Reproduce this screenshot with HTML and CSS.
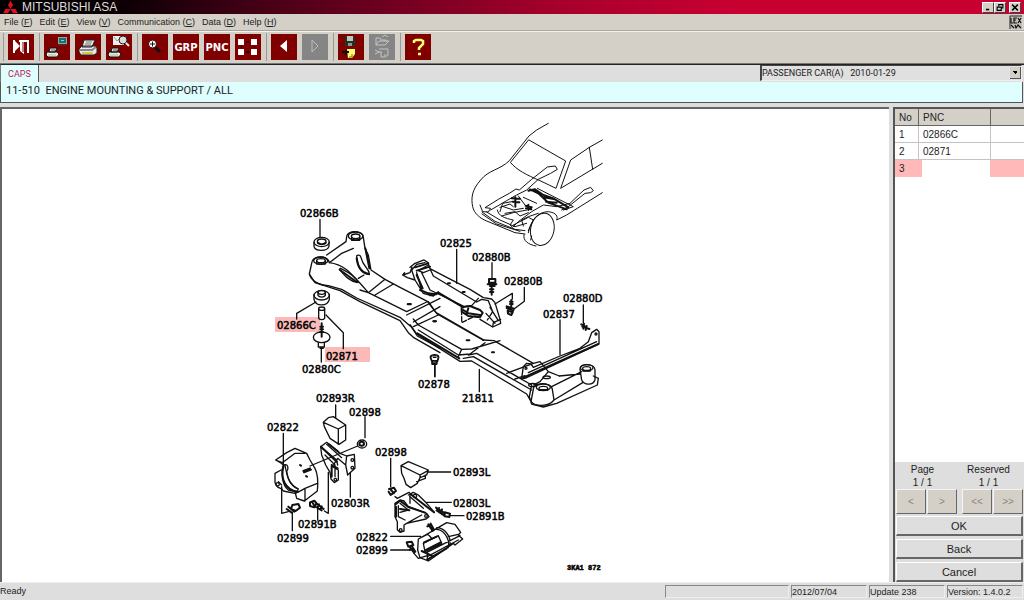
FILE: index.html
```html
<!DOCTYPE html>
<html lang="en">
<head>
<meta charset="utf-8">
<title>MITSUBISHI ASA</title>
<link rel="stylesheet" href="styles.css">
</head>
<body>
<header class="titlebar">
  <svg class="logo" viewBox="0 0 18 15" aria-hidden="true"><path d="M9 0l3 5-3 5-3-5zM9 10H3L0 15h6zM9 10h6l3 5h-6z" fill="#e01020"/></svg>
  <h1 class="app-name">MITSUBISHI ASA</h1>
  <div class="window-controls">
    <button class="win-btn" aria-label="Minimize"><svg viewBox="0 0 11 11"><path d="M3 8h4" stroke="#000" stroke-width="2"/></svg></button>
    <button class="win-btn" aria-label="Restore"><svg viewBox="0 0 11 11"><path d="M4 4V2h5v4H7M4 2h5M2 5h5v4H2zM2 5h5" fill="none" stroke="#000" stroke-width="1.4"/></svg></button>
    <button class="win-btn win-close" aria-label="Close"><svg viewBox="0 0 11 11"><path d="M2 2l7 7M9 2L2 9" stroke="#000" stroke-width="1.8"/></svg></button>
  </div>
</header>

<nav class="menubar">
  <button class="menu">File (<u>F</u>)</button>
  <button class="menu">Edit (<u>E</u>)</button>
  <button class="menu">View (<u>V</u>)</button>
  <button class="menu">Communication (<u>C</u>)</button>
  <button class="menu">Data (<u>D</u>)</button>
  <button class="menu">Help (<u>H</u>)</button>
  <svg class="lex" viewBox="0 0 13 14" aria-hidden="true"><path d="M0 0h13v14H0z" fill="#c4c0b8"/><path d="M1 14V1h12" fill="none" stroke="#333"/><path d="M2 3v5h2M8 3H5v5h3M5 5h2M9 3l3 5M12 3L9 8M2 10l3 3M6 10l1 3 2-3 3 3" fill="none" stroke="#111" stroke-width="1.2"/></svg>
</nav>

<div class="toolbar" role="toolbar" aria-label="Tools">
  <span class="sep"></span>
  <button class="tool" aria-label="Exit"><svg viewBox="0 0 26 26"><path d="M5 6h2v13H5zM7 7l5 5-5 5z" fill="#fff"/><path d="M11 6h10v13h-2V8h-3v12l-4-3V8h-1z" fill="#fff"/><path d="M15 8v10" stroke="#800000"/></svg></button>
  <span class="sep"></span>
  <button class="tool" aria-label="Print screen"><svg viewBox="0 0 26 26"><path d="M14 3h9v7h-9z" fill="#8aa"/><path d="M15 4h7v5h-7z" fill="#187070"/><path d="M17 6h3v1h-3z" fill="#6dd"/><path d="M14 11h9" stroke="#533"/><path d="M6 14h7l-2 4H5zM3 18h10l2 2-2 3H4l-2-2z" fill="#e8e8e8" stroke="#111"/><path d="M4 21h8" stroke="#bb8"/><path d="M7 16h4" stroke="#555"/></svg></button>
  <button class="tool" aria-label="Print"><svg viewBox="0 0 26 26"><path d="M9 6h11l-3 7H7zM7 12h13l2 2v5l-3 2H6l-2-3v-3z" fill="#e8e8e8" stroke="#222"/><path d="M11 8h6M10 10h6" stroke="#777"/><path d="M5 16h12l4-3" fill="none" stroke="#888" stroke-width="2"/><path d="M7 19h11" stroke="#d4c64c" stroke-width="2"/></svg></button>
  <button class="tool" aria-label="Print preview"><svg viewBox="0 0 26 26"><path d="M7 2h11v9H7z" fill="#eee"/><path d="M8 3l3 4 3-3 3 6" fill="none" stroke="#999"/><circle cx="17" cy="6" r="4" fill="#ddd" stroke="#222"/><path d="M20 9l3 3" stroke="#eee" stroke-width="2"/><path d="M6 14h7l-2 4H5zM3 18h10l2 2-2 3H4l-2-2z" fill="#e8e8e8" stroke="#111"/><path d="M4 21h8" stroke="#bb8"/><path d="M7 16h4" stroke="#555"/></svg></button>
  <span class="sep"></span>
  <button class="tool" aria-label="Zoom in"><svg viewBox="0 0 26 26"><path d="M13 13l5 5" stroke="#111" stroke-width="3"/><circle cx="10.500" cy="10" r="4" fill="#fff" stroke="#400"/><path d="M8 10h5M10.500 7.500v5" stroke="#111"/></svg></button>
  <button class="tool tool-text">GRP</button>
  <button class="tool tool-text">PNC</button>
  <button class="tool" aria-label="Tile view"><svg viewBox="0 0 26 26"><path d="M3 5h6v6H3zM16 5h6v6h-6zM3 15h6v6H3zM16 15h6v6h-6z" fill="#fff"/><path d="M11 8h3M11 18h3M6 13h1M19 13h1" stroke="#200" stroke-width="2"/></svg></button>
  <span class="sep"></span>
  <button class="tool" aria-label="Previous"><svg viewBox="0 0 26 26"><path d="M9 12l7-6v12z" fill="#fff"/></svg></button>
  <button class="tool" aria-label="Next" disabled><svg viewBox="0 0 26 26"><path d="M10 6l6 6-6 6z" fill="none" stroke="#bbb"/></svg></button>
  <span class="sep"></span>
  <button class="tool" aria-label="Save"><svg viewBox="0 0 26 26"><path d="M7 2h10v10H7z" fill="#243424"/><path d="M9 2h6v5H9z" fill="#bcc8bc"/><path d="M10 9h4v3h-4z" fill="#899"/><path d="M9 15h8v5l-3 4h-4z" fill="#ffff70"/><path d="M4 18h7M8 16v5" stroke="#111" stroke-width="2"/><path d="M14 20v3h-3" fill="none" stroke="#770"/></svg></button>
  <button class="tool" aria-label="Open" disabled><svg viewBox="0 0 26 26" fill="none" stroke="#c4c4c4"><path d="M7 11V4h4l1 2h5v2M7 11l3-4h10l-4 4zM13 3l3-2 3 2M10 15h9v6l-3 2h-4v-5M6 16l4 2-4 2M9 18h4M16 20v2"/></svg></button>
  <span class="sep"></span>
  <button class="tool" aria-label="Help"><svg viewBox="0 0 26 26"><path d="M9 9V7l2-1h5l2 1v3l-4 4v2M13 20h3" fill="none" stroke="#ffff70" stroke-width="2.500"/></svg></button>
</div>

<div class="tabs">
  <button class="tab">CAPS</button>
  <select class="catalog" aria-label="Catalog"><option>PASSENGER CAR(A) &nbsp; 2010-01-29</option></select>
</div>
<h2 class="heading">11-510 &nbsp;ENGINE MOUNTING &amp; SUPPORT / ALL</h2>

<main class="main">
  <section class="canvas" aria-label="Parts drawing">
    <svg class="drawing" viewBox="2 109 887 472" preserveAspectRatio="xMinYMin meet">
      <g class="marks"><rect x="275" y="317" width="45" height="15"/><rect x="325" y="347" width="45" height="15"/></g>

      <!-- vehicle body -->
      <g class="ink thin" transform="translate(460 110) scale(.33333)">
        <path d="M265 40L230 60 207 78 148 152C120 180 85 180 62 210C35 240 33 265 38 290C42 310 60 325 80 333L165 368 195 372"/>
        <path d="M207 90L317 153 288 235 240 212C200 195 170 180 152 158ZM427 90L388 112 332 150 302 235 427 160M388 112L398 178"/>
        <path d="M60 285L68 305 85 306 92 295 75 293 115 268 148 250 168 237 178 240 215 208 262 171 286 168 292 178 272 190 235 208 200 240 170 255 140 272 92 300"/>
        <path d="M80 306L120 330 165 350 200 340M66 312L110 342 180 364M120 305L128 280 155 275M112 300C115 318 135 325 160 330L150 345 158 352 175 335 215 305 250 285 290 290 330 280 372 240 392 232 400 242 392 248 375 250 325 290 305 300"/>
        <path d="M205 368C212 330 235 305 265 305C290 308 294 320 290 330L320 315 427 248M190 348L185 330 205 320 235 310"/>
        <path d="M130 290L160 300 190 295M135 310L165 305 180 318 205 308M190 262L230 280"/>
        <ellipse cx="247" cy="358" rx="35" ry="49" transform="rotate(12 247 358)"/><path d="M192 374C188 392 205 404 228 408M215 378L212 390"/>
        <path d="M66 306L105 334 165 358 195 362M120 292L150 282 160 290M125 318L160 308 200 300M160 345L205 322 220 330 205 362M232 235L340 290 310 300M175 258L195 285"/>
        <path class="heavy" d="M205 242L225 238 250 255 280 265 325 292M210 238L235 250 265 278 320 298M252 262L285 268M258 275L290 278M155 265L180 266M158 275L178 277M197 287L215 292M198 295L214 298M166 262V290M205 284V300"/>
      </g>

      <!-- crossmember, left end and its hardware -->
      <g class="ink" transform="translate(260 200) scale(.33333)">
        <path d="M180 58V112M110 357V340L168 306M198 345L250 398V446M184 446V486"/>
        <path d="M162 127V139C165 155 202 155 207 139V127"/><ellipse cx="185" cy="126" rx="23" ry="14"/><ellipse cx="185" cy="125" rx="13" ry="8"/><path class="heavy" d="M174 128C180 134 190 134 197 128"/>
        <path d="M260 110C262 90 308 90 310 112L315 145 325 165 333 210 375 238 420 262 502 304 528 338M260 110L258 125 200 165M155 190C155 165 205 165 208 188L245 160 280 145M155 190L148 222C155 245 180 255 205 257L245 268 290 294 420 352 455 382 472 408 540 445"/>
        <path d="M208 188C260 195 280 230 305 255L325 278 375 238M345 285L400 252M150 225L165 248 240 272 300 305 420 362 445 398 460 412 540 458M325 278L440 335 500 306M440 345L540 295M325 278L300 270M460 366L540 320"/>
        <ellipse cx="287" cy="108" rx="22" ry="12"/><ellipse cx="287" cy="109" rx="13" ry="7"/><ellipse cx="182" cy="182" rx="21" ry="11"/><ellipse cx="183" cy="182" rx="13" ry="6"/><path d="M170 182V192H196V182M275 110V121H299V110"/>
        <path d="M290 168C292 200 305 220 328 224C330 205 310 205 302 170C300 165 293 164 290 168M238 208C255 228 270 245 294 248C290 232 262 215 242 205ZM318 150L330 205M295 235L312 225"/>
        <path class="heavy" d="M290 175C293 200 305 218 325 222M240 210L290 246M316 145L328 205M443 313H452M520 364H528"/>
        <path d="M162 283V298C166 320 203 320 208 298V283"/><ellipse cx="185" cy="286" rx="23" ry="14"/><path d="M174 276V286C178 293 192 293 196 286V276"/><ellipse cx="185" cy="277" rx="11" ry="6"/>
        <path d="M176 327V355C180 360 190 360 194 355V327"/><ellipse cx="185" cy="326" rx="9" ry="5"/>
        <ellipse cx="185" cy="412" rx="25" ry="16"/><path d="M175 430V441H193V430M180 445H190"/><path class="heavy" d="M185 370V410M181 380H189M181 388H189M181 396H189"/>
        <path d="M511 470C513 462 535 462 536 470L532 482H516ZM517 483V491H530V483M525 491V530M520 472H528"/>
      </g>

      <!-- upper bracket and crossmember, right end -->
      <g class="ink" transform="translate(400 230) scale(.33333)">
        <path d="M170 58V160M276 98V145M373 172V214L342 237M285 222L337 190V207M550 225V280M480 270V374M238 418V485"/>
        <path d="M185 240V278L225 258" stroke-dasharray="14 6"/>
        <path d="M30 112L45 100 72 90 84 98 90 116 130 137 210 178 250 203 275 207 285 218 300 268 302 280 278 291 240 268M8 135L30 128 36 112M8 135L22 143 45 150 70 190 100 198 115 185M8 135L14 128M45 150L35 120 50 103 75 98M50 128L65 180M65 128L90 180 190 228M90 120L70 128 55 122 85 105M90 116L100 138 190 192 230 216M230 216L245 208 265 212 278 245 262 270M270 232L295 272M258 250L285 280M235 205L215 227 190 230M278 291L280 278 302 268"/>
        <path class="heavy" d="M45 112L85 100M50 122L90 110M60 180L85 190 108 193M90 196L115 190M185 232L210 228 240 240 248 248 240 262 205 258 185 245ZM190 240L205 250 240 255M115 188L190 232M50 135L68 175M205 235L200 250M144 160H150M188 186H194M24 222H32M101 274H107M200 331H208M276 367H282"/>
        <path d="M85 215L110 250M248 330L282 332 400 400 420 395 445 425 478 438M40 290L115 255M40 267L55 285 185 358 215 357 300 332M55 300L175 375 210 372 255 338M185 358L175 380M30 284L50 312 180 394 215 393 380 492 395 518M190 385L220 380 395 480M205 375L230 370 395 465M320 430L400 400M345 447L375 437M395 465L388 500 395 522 430 531 470 520 592 465 595 445 580 438"/>
        <path class="heavy" d="M112 251L250 330M52 310L178 385"/>
        <path d="M400 478C398 455 455 455 457 478L462 510C445 532 405 530 393 515ZM540 418C540 398 585 400 585 420V450C578 468 552 465 545 450ZM455 470L545 425M462 510L548 458M400 465L420 455 445 425M478 438L540 432"/>
        <ellipse cx="430" cy="472" rx="21" ry="10"/><ellipse cx="430" cy="475" rx="13" ry="6"/><ellipse cx="560" cy="413" rx="19" ry="9"/><ellipse cx="560" cy="416" rx="12" ry="6"/><ellipse cx="440" cy="442" rx="11" ry="4"/><ellipse cx="398" cy="465" rx="12" ry="5"/>
        <path class="heavy" d="M418 480H442M550 422H570M370 443L595 342"/>
        <path d="M365 445L370 410 380 400 393 402 400 412 480 378 540 355 565 335 575 308 590 298 597 305V342L375 445ZM385 428L590 335"/><circle cx="378" cy="415" r="3"/><circle cx="588" cy="312" r="3"/>
        <path class="heavy" d="M267 147H286V158H267ZM263 163H289M270 168H284M275 172V194M270 178H280M270 186H280M334 210V228M330 215H338M330 222H338M320 229L342 236M320 234L340 242M323 242L338 247 334 255 324 251ZM544 283L556 290M547 290L568 297M552 281L550 296M560 288L557 300"/>
        <path d="M91 383C93 375 115 375 116 383L112 396H96ZM96 397V403H110V397M104 403V440"/>
      </g>

      <!-- right-hand engine mount -->
      <g class="ink" transform="translate(255 385) scale(.33333)">
        <path d="M242 60V98M330 95V158M85 145V238M286 262V336M80 305V385L100 380M220 262V385L208 378M112 382V437M188 368V405M308 183L165 243"/>
        <path d="M205 112L220 98 235 95 272 120V165L252 178 225 160 208 125ZM205 112L250 132 272 120M250 132V178"/>
        <ellipse cx="321" cy="177" rx="14" ry="12"/><ellipse class="heavy" cx="320" cy="176" rx="7" ry="6"/>
        <path d="M62 225L95 203 120 190 155 205 165 225 180 250C190 270 190 290 187 318L148 348 125 340 120 320 100 315C80 300 78 260 85 240L75 232ZM62 225L82 233 120 205 150 205M85 240C100 235 102 250 95 260C98 285 110 305 130 312L123 325M78 255L60 265V292C65 315 80 305 85 318L120 325M128 322L150 310 187 295M70 290L80 300M150 310V348"/>
        <circle cx="68" cy="298" r="5"/><path class="heavy" d="M86 242C75 280 90 315 128 320M145 258L165 250M147 262L168 254M135 240L138 242M153 273L156 275"/>
        <path d="M90 240C98 290 110 300 125 310"/>
        <path d="M197 185L215 172 255 205 275 213 298 208 300 250 278 270 272 240 248 220 232 245 250 255V285L238 293 228 282 225 262 212 240 200 210ZM197 185L245 225 248 240M215 178L260 218M210 210L240 240V275M275 213L272 240"/><circle cx="292" cy="225" r="4"/><circle cx="292" cy="248" r="4"/><circle cx="241" cy="284" r="4"/>
        <path class="heavy" d="M198 185L245 230M230 240L248 250M230 240V275M222 178L250 200"/>
        <path class="heavy" d="M95 372L110 383M100 365L118 380M112 360L130 357 135 368 122 378 108 372ZM165 352L178 347 185 355 178 367 165 363ZM182 353L206 372M178 363L200 376M172 352L178 362M192 358L188 368M200 364L196 374"/>
      </g>

      <!-- left-hand engine mount -->
      <g class="ink" transform="translate(340 435) scale(.33333)">
        <path d="M152 70V155M262 111H332M260 202H334M330 242H372M152 304H242M152 345H205M165 185L172 190 207 172 215 180M222 355L235 370 262 362M210 180V205"/>
        <path d="M183 92L205 80 265 105 260 120 240 128 232 145 212 158 198 148 192 130 185 115ZM183 92L240 120 265 106M240 120V128M230 140L256 130V120"/>
        <path class="heavy" d="M147 162L162 158 168 168 152 180 146 170M153 165L162 175"/>
        <path d="M165 205L180 195 192 198 205 215 260 235 267 245 258 252 200 265 192 270V288L180 292 172 284V260L165 245ZM180 205L205 225 180 232M205 180L220 172 235 180 260 205 283 232M210 185L250 220M200 265L245 240M175 212V245L195 255"/>
        <circle cx="182" cy="285" r="4"/><circle cx="258" cy="243" r="4"/><circle cx="225" cy="183" r="5"/>
        <path class="heavy" d="M167 208L180 197 205 216 255 233M168 215V245M215 180L282 232M180 222L208 226"/>
        <path class="heavy" d="M288 218L315 235M290 226L312 241M297 219L294 228M306 223L302 234M314 232L330 236 328 246 314 244Z"/>
        <path d="M235 312L260 298 320 263 345 268 362 292 355 300 368 312 345 330 340 325 265 378 240 368 233 345ZM235 312L262 298C268 300 270 305 275 310M250 325L295 302 305 325 255 350ZM275 285C310 275 330 310 325 338M290 278C320 280 332 310 330 325M265 350L360 302M262 365L355 315M325 305L355 298M262 350V375"/>
        <path class="heavy" d="M252 322L290 305M258 345L302 322M245 348L275 362M262 374L320 340M265 268L278 288M272 266L282 284M262 274L272 268M200 322L215 320 220 330 205 335ZM210 337L222 353M215 332L226 350M208 345L220 342"/>
      </g>

      <g class="labels">
        <text x="300" y="217">02866B</text><text x="440" y="247">02825</text><text x="472" y="261">02880B</text><text x="504" y="285">02880B</text>
        <text x="563" y="302">02880D</text><text x="543" y="318">02837</text><text x="277" y="329">02866C</text><text x="326" y="360">02871</text>
        <text x="302" y="373">02880C</text><text x="418" y="388">02878</text><text x="462" y="402">21811</text><text x="316" y="402">02893R</text>
        <text x="349" y="416">02898</text><text x="267" y="431">02822</text><text x="375" y="456">02898</text><text x="453" y="476">02893L</text>
        <text x="331" y="507">02803R</text><text x="453" y="507">02803L</text><text x="466" y="520">02891B</text><text x="298" y="528">02891B</text>
        <text x="277" y="542">02899</text><text x="356" y="541">02822</text><text x="356" y="554">02899</text>
        <text class="plate" x="567" y="570">3KA1 872</text>
      </g>
    </svg>
  </section>

  <aside class="side">
    <div class="list">
      <table class="pnc">
        <colgroup><col class="c-no"><col class="c-pnc"><col></colgroup>
        <thead><tr><th>No</th><th>PNC</th><th></th></tr></thead>
        <tbody>
          <tr><td>1</td><td>02866C</td><td></td></tr>
          <tr><td>2</td><td>02871</td><td></td></tr>
          <tr class="current"><td>3</td><td></td><td></td></tr>
        </tbody>
      </table>
    </div>
    <div class="pager">
      <div class="pager-group"><p class="pager-text">Page<br>1 / 1</p><div class="pair"><button class="step" disabled>&lt;</button><button class="step" disabled>&gt;</button></div></div>
      <div class="pager-group"><p class="pager-text">Reserved<br>1 / 1</p><div class="pair"><button class="step" disabled>&lt;&lt;</button><button class="step" disabled>&gt;&gt;</button></div></div>
    </div>
    <div class="actions"><button class="action">OK</button><button class="action">Back</button><button class="action">Cancel</button></div>
  </aside>
</main>

<footer class="status">
  <span class="ready">Ready</span>
  <span class="cell cell-wide"></span>
  <span class="cell">2012/07/04</span>
  <span class="cell">Update 238</span>
  <span class="cell">Version: 1.4.0.2</span>
</footer>
</body>
</html>
```
FILE: styles.css
```css
* { box-sizing: border-box; }
body {
  margin: 0;
  height: 100vh;
  display: flex;
  flex-direction: column;
  background: #dedede;
  color: #222;
  font-family: "Liberation Sans", Arial, sans-serif;
  font-size: 10px;
}
button { font: inherit; color: inherit; padding: 0; border: 0; background: none; border-radius: 0; }
h1, h2, p { margin: 0; font-weight: normal; }

.titlebar {
  flex: none;
  height: 14px;
  display: flex;
  align-items: center;
  padding: 0 3px;
  background: linear-gradient(90deg, #000 0, #0c0004 12%, #4c0018 27%, #a8002c 55%, #c80032 72%);
}
.logo { width: 15px; height: 14px; }
.app-name { margin-left: 4px; font-size: 12px; line-height: 16px; color: #ddd; }
.window-controls { display: flex; margin-left: auto; }
.win-btn { width: 12px; height: 11px; background: #d4d0c8; border: 1px solid; border-color: #fff #444 #444 #fff; }
.win-btn svg { display: block; width: 100%; height: 100%; }
.win-close { margin-left: 3px; }

.menubar {
  flex: none;
  height: 17px;
  display: flex;
  align-items: center;
  gap: 7px;
  padding: 0 2px 0 4px;
  background: #d4d0c8;
  border-bottom: 1px solid #aaa69e;
}
.menu { font-size: 9px; white-space: nowrap; }
.lex { width: 13px; height: 14px; margin-left: auto; }

.toolbar {
  flex: none;
  height: 33px;
  display: flex;
  align-items: center;
  gap: 5px;
  padding: 0 3px 1px;
  background: #d4d0c8;
  border-top: 1px solid #f4f2ee;
  border-bottom: 1px solid #777;
}
.sep { width: 1px; height: 28px; margin-right: -1px; background: #999; }
.tool { width: 26px; height: 26px; background: #800000; }
.tool:disabled { background: #858585; }
.tool svg { display: block; width: 26px; height: 26px; }
.tool-text { font: bold 10px "DejaVu Sans", sans-serif; color: #fff; text-align: center; }

.tabs {
  flex: none;
  height: 18px;
  display: flex;
  justify-content: space-between;
  padding-right: 2px;
  border-top: 1px solid #222;
  border-left: 1px solid #777;
}
.tab {
  width: 38px;
  background: #dfffff;
  border-right: 1px solid #555;
  color: #c02050;
  font: 9px Roboto, sans-serif;
}
.catalog {
  width: 262px;
  height: 16px;
  appearance: none;
  padding: 0;
  border: 1px solid;
  border-color: #444 #eee #eee #444;
  border-left-width: 2px;
  border-radius: 0;
  color: #222;
  font: 9px Roboto, sans-serif;
  background:
    conic-gradient(from -45deg at 50% 100%, #000 90deg, transparent 0) right 3px top 5px / 6px 3px no-repeat,
    linear-gradient(#d4d0c8, #d4d0c8) right 1px top 1px / 10px 11px no-repeat,
    linear-gradient(#555, #555) right 0 top 1px / 11px 12px no-repeat,
    #e0e0e0;
}
/* down-pointing arrow over its raised face */
.catalog {
  background-image:
    conic-gradient(from -45deg at 50% 100%, #000 90deg, #000 0),
    linear-gradient(#d4d0c8, #d4d0c8),
    linear-gradient(#555, #555);
  background-image:
    conic-gradient(from -45deg at 50% 100%, #000 90deg, transparent 0),
    linear-gradient(#d4d0c8, #d4d0c8),
    linear-gradient(#555, #555);
}
.heading {
  flex: none;
  height: 21px;
  margin-right: 1px;
  padding-left: 5px;
  background: #dfffff;
  border: solid #555;
  border-width: 0 1px 1px;
  font: 11px/17px Roboto, sans-serif;
}

.main {
  flex: 1;
  min-height: 0;
  margin-top: 4px;
  display: grid;
  grid-template-columns: minmax(0, 1fr) 131px;
  gap: 4px;
}
.canvas { background: #fff; border: solid #666; border-width: 2px 0 0 2px; min-height: 0; overflow: hidden; }
.drawing { display: block; width: 100%; height: 100%; }
.marks { fill: #fbb9b7; }
.ink { fill: none; stroke: #111; stroke-width: 4; stroke-linejoin: round; stroke-linecap: round; }
.thin { stroke-width: 3; }
.heavy { stroke-width: 6; }
.labels { font: 10px "DejaVu Sans", sans-serif; fill: #000; stroke: #000; stroke-width: .5; }
.plate { font: bold 7px "Liberation Mono", monospace; }

.side { display: flex; flex-direction: column; min-height: 0; border: solid #555; border-width: 2px 0 0 2px; }
.list { flex: 1; min-height: 0; background: #fff; }
.pnc { width: 100%; table-layout: fixed; border-collapse: separate; border-spacing: 0; }
.c-no { width: 24px; }
.c-pnc { width: 72px; }
.pnc th, .pnc td {
  height: 17px;
  padding: 1px 4px 0;
  text-align: left;
  font-weight: normal;
  line-height: 15px;
  border: solid #c4c4c4;
  border-width: 0 1px 1px 0;
}
.pnc th { background: #d4d0c8; border-color: #666; }
.pnc th:last-child, .pnc td:last-child { border-right: 0; }
.pnc .current td { border-color: transparent; background: #ffb9b9; }
.pnc .current td:nth-child(2) { background: linear-gradient(90deg, #ffb9b9 3px, #fff 3px); }

.pager { display: flex; justify-content: space-between; padding: 1px 1px 0; gap: 5px; }
.pager-group { flex: 1; }
.pager-text { text-align: center; line-height: 13px; padding-right: 8px; }
.pair { display: grid; grid-template-columns: 1fr 1fr; gap: 1px; }
.step { height: 25px; background: #d4d0c8; border: 1px solid; border-color: #f4f4f4 #666 #666 #f4f4f4; color: #888; }
.actions { display: grid; gap: 3px; padding: 2px 1px 0; }
.action { height: 20px; font-size: 11px; border: solid; border-width: 1px 2px 2px 1px; border-color: #fff #666 #666 #fff; }

.status {
  flex: none;
  height: 18px;
  display: flex;
  align-items: flex-start;
  gap: 2px;
  padding: 2px 1px 0 0;
  font-size: 9px;
  line-height: 12px;
  border-top: 1px solid #eee;
}
.ready { flex: 1; }
.cell { width: 76px; height: 13px; border: 1px solid; border-color: #888 #eee #eee #888; white-space: nowrap; }
.cell-wide { width: 124px; }
```
